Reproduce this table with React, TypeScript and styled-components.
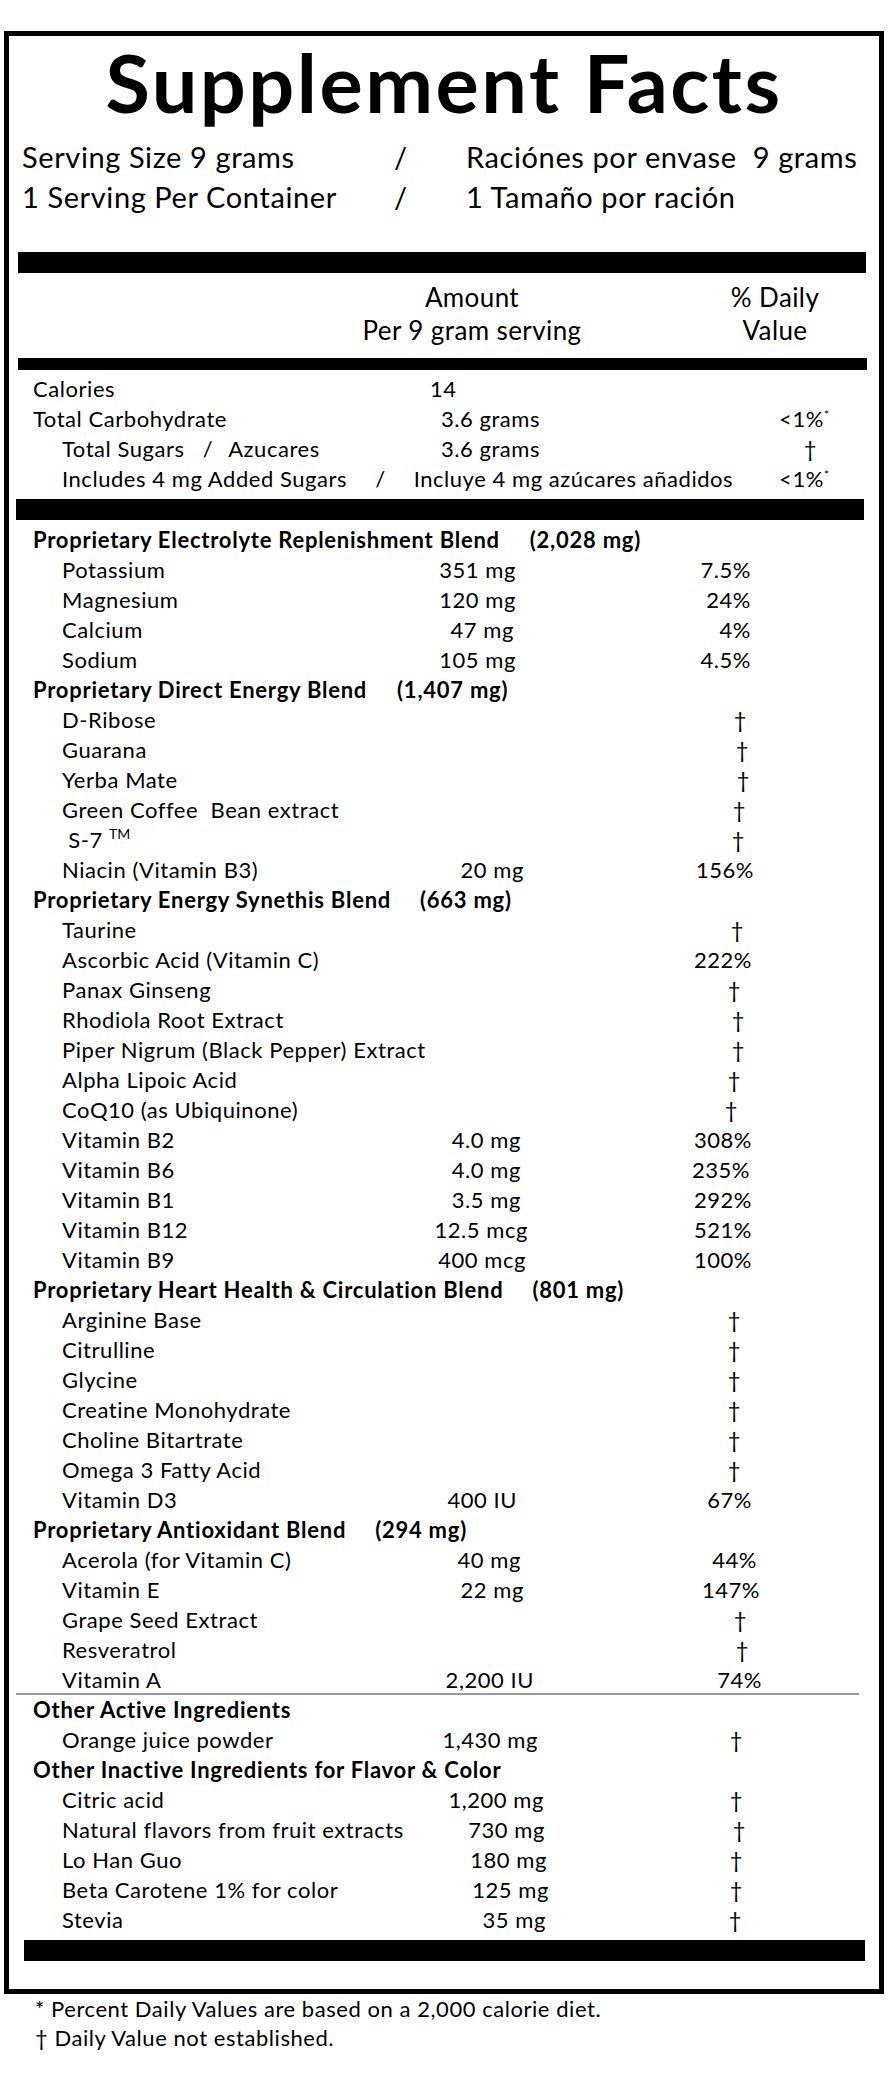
import React from 'react';
import styled, { createGlobalStyle } from 'styled-components';

const GlobalStyle = createGlobalStyle`
  html, body {
    margin: 0;
    padding: 0;
    background: #fff;
  }
  body {
    font-family: Lato, "Liberation Sans", sans-serif;
    color: #000;
  }
`;

const Page = styled.div`
  width: 893px;
  box-sizing: border-box;
  padding: 31px 0 0 4px;
`;

const Panel = styled.section`
  width: 880px;
  box-sizing: border-box;
  border: 5px solid #000;
  padding-bottom: 28px;
`;

const Title = styled.h1`
  margin: 5px 0 0;
  font-size: 81px;
  line-height: 81px;
  font-weight: 700;
  text-align: center;
  letter-spacing: 2.5px;
`;

const Serving = styled.div`
  margin-top: 15px;
  padding-left: 13px;
  display: grid;
  grid-template-columns: 372px 72px 1fr;
  font-size: 29px;
  line-height: 40px;
  letter-spacing: 0.6px;
  white-space: pre;
`;

const Bar = styled.div<{ $h: number; $top: number; $l: number; $r: number }>`
  height: ${(p) => p.$h}px;
  margin: ${(p) => p.$top}px ${(p) => p.$r}px 0 ${(p) => p.$l}px;
  background: #000;
`;

const ColumnHead = styled.div`
  margin-top: 8px;
  display: flex;
  padding-left: 343px;
  font-size: 26px;
  line-height: 33px;
  letter-spacing: 0.4px;
  text-align: center;
`;

const HeadCell = styled.div<{ $w: number; $gap?: number }>`
  width: ${(p) => p.$w}px;
  margin-left: ${(p) => p.$gap ?? 0}px;
`;

const Rows = styled.div<{ $top: number }>`
  margin: ${(p) => p.$top}px 7px 0;
  font-size: 22px;
  letter-spacing: 0.55px;
`;

const Row = styled.div<{ $divider?: boolean }>`
  display: grid;
  grid-template-columns: 397px 130px 312px;
  padding-left: 17px;
  height: ${(p) => (p.$divider ? 28 : 30)}px;
  line-height: 30px;
  white-space: pre;
  ${(p) =>
    p.$divider &&
    `
    margin-right: 13px;
    border-bottom: 2px solid #9a9a9a;
  `}
`;

const Name = styled.div<{ $indent?: boolean; $span?: number }>`
  padding-left: ${(p) => (p.$indent ? 29 : 0)}px;
  grid-column: ${(p) => (p.$span ? `1 / span ${p.$span}` : 'auto')};
`;

const BlendName = styled.div`
  grid-column: 1 / -1;
  font-weight: 700;
  letter-spacing: 0.75px;
`;

const Qty = styled.span<{ $gap: number }>`
  margin-left: ${(p) => p.$gap}px;
`;

const Amount = styled.div<{ $end: number }>`
  text-align: right;
  padding-right: ${(p) => 560 - p.$end}px;
`;

const Daily = styled.div<{ $end: number }>`
  text-align: right;
  padding-right: ${(p) => 872 - p.$end}px;
`;

const Sup = styled.sup<{ $size: number }>`
  font-size: ${(p) => p.$size}px;
  line-height: 0;
  letter-spacing: 0;
  vertical-align: ${(p) => p.$size / 2 + 2}px;
`;

const Notes = styled.div`
  padding-left: 31px;
  font-size: 22px;
  line-height: 29px;
  letter-spacing: 0.55px;
`;

type Item = {
  name?: string;
  blend?: string;
  qty?: string;
  gap?: number;
  amt?: string;
  amtEnd?: number;
  dv?: string;
  dvEnd?: number;
  tm?: boolean;
  divider?: boolean;
};

const D = '\u2020';

const items: Item[] = [
  { blend: 'Proprietary Electrolyte Replenishment Blend', qty: '(2,028 mg)', gap: 30 },
  { name: 'Potassium', amt: '351 mg', amtEnd: 516, dv: '7.5%', dvEnd: 751 },
  { name: 'Magnesium', amt: '120 mg', amtEnd: 516, dv: '24%', dvEnd: 751 },
  { name: 'Calcium', amt: '47 mg', amtEnd: 514, dv: '4%', dvEnd: 751 },
  { name: 'Sodium', amt: '105 mg', amtEnd: 516, dv: '4.5%', dvEnd: 751 },
  { blend: 'Proprietary Direct Energy Blend', qty: '(1,407 mg)', gap: 30 },
  { name: 'D-Ribose', dv: D, dvEnd: 747 },
  { name: 'Guarana', dv: D, dvEnd: 749 },
  { name: 'Yerba Mate', dv: D, dvEnd: 750 },
  { name: 'Green Coffee  Bean extract', dv: D, dvEnd: 746 },
  { name: ' S-7 ', tm: true, dv: D, dvEnd: 745 },
  { name: 'Niacin (Vitamin B3)', amt: '20 mg', amtEnd: 524, dv: '156%', dvEnd: 754 },
  { blend: 'Proprietary Energy Synethis Blend', qty: '(663 mg)', gap: 29 },
  { name: 'Taurine', dv: D, dvEnd: 744 },
  { name: 'Ascorbic Acid (Vitamin C)', dv: '222%', dvEnd: 752 },
  { name: 'Panax Ginseng', dv: D, dvEnd: 741 },
  { name: 'Rhodiola Root Extract', dv: D, dvEnd: 745 },
  { name: 'Piper Nigrum (Black Pepper) Extract', dv: D, dvEnd: 745 },
  { name: 'Alpha Lipoic Acid', dv: D, dvEnd: 741 },
  { name: 'CoQ10 (as Ubiquinone)', dv: D, dvEnd: 738 },
  { name: 'Vitamin B2', amt: '4.0 mg', amtEnd: 521, dv: '308%', dvEnd: 752 },
  { name: 'Vitamin B6', amt: '4.0 mg', amtEnd: 521, dv: '235%', dvEnd: 750 },
  { name: 'Vitamin B1', amt: '3.5 mg', amtEnd: 521, dv: '292%', dvEnd: 752 },
  { name: 'Vitamin B12', amt: '12.5 mcg', amtEnd: 528, dv: '521%', dvEnd: 752 },
  { name: 'Vitamin B9', amt: '400 mcg', amtEnd: 526, dv: '100%', dvEnd: 752 },
  { blend: 'Proprietary Heart Health & Circulation Blend', qty: '(801 mg)', gap: 29 },
  { name: 'Arginine Base', dv: D, dvEnd: 741 },
  { name: 'Citrulline', dv: D, dvEnd: 741 },
  { name: 'Glycine', dv: D, dvEnd: 741 },
  { name: 'Creatine Monohydrate', dv: D, dvEnd: 741 },
  { name: 'Choline Bitartrate', dv: D, dvEnd: 741 },
  { name: 'Omega 3 Fatty Acid', dv: D, dvEnd: 741 },
  { name: 'Vitamin D3', amt: '400 IU', amtEnd: 517, dv: '67%', dvEnd: 752 },
  { blend: 'Proprietary Antioxidant Blend', qty: '(294 mg)', gap: 29 },
  { name: 'Acerola (for Vitamin C)', amt: '40 mg', amtEnd: 521, dv: '44%', dvEnd: 757 },
  { name: 'Vitamin E', amt: '22 mg', amtEnd: 524, dv: '147%', dvEnd: 760 },
  { name: 'Grape Seed Extract', dv: D, dvEnd: 747 },
  { name: 'Resveratrol', dv: D, dvEnd: 749 },
  { name: 'Vitamin A', amt: '2,200 IU', amtEnd: 534, dv: '74%', dvEnd: 762, divider: true },
  { blend: 'Other Active Ingredients' },
  { name: 'Orange juice powder', amt: '1,430 mg', amtEnd: 538, dv: D, dvEnd: 743 },
  { blend: 'Other Inactive Ingredients for Flavor & Color' },
  { name: 'Citric acid', amt: '1,200 mg', amtEnd: 544, dv: D, dvEnd: 743 },
  { name: 'Natural flavors from fruit extracts', amt: '730 mg', amtEnd: 545, dv: D, dvEnd: 746 },
  { name: 'Lo Han Guo', amt: '180 mg', amtEnd: 547, dv: D, dvEnd: 743 },
  { name: 'Beta Carotene 1% for color', amt: '125 mg', amtEnd: 549, dv: D, dvEnd: 743 },
  { name: 'Stevia', amt: '35 mg', amtEnd: 546, dv: D, dvEnd: 742 },
];

const LessThanOne = () => (
  <>
    {'<1%'}
    <Sup $size={12}>*</Sup>
  </>
);

const IngredientRow = ({ item }: { item: Item }) => {
  if (item.blend) {
    return (
      <Row>
        <BlendName>
          {item.blend}
          {item.qty && <Qty $gap={item.gap ?? 30}>{item.qty}</Qty>}
        </BlendName>
      </Row>
    );
  }
  return (
    <Row $divider={item.divider}>
      <Name $indent>
        {item.name}
        {item.tm && <Sup $size={14}>TM</Sup>}
      </Name>
      <Amount $end={item.amtEnd ?? 520}>{item.amt}</Amount>
      <Daily $end={item.dvEnd ?? 750}>{item.dv}</Daily>
    </Row>
  );
};

export default function App() {
  return (
    <Page>
      <GlobalStyle />
      <Panel>
        <Title>Supplement Facts</Title>
        <Serving>
          <span>Serving Size 9 grams</span>
          <span>/</span>
          <span>Raciónes por envase  9 grams</span>
          <span>1 Serving Per Container</span>
          <span>/</span>
          <span>1 Tamaño por ración</span>
        </Serving>

        <Bar $h={21} $top={35} $l={9} $r={13} />
        <ColumnHead>
          <HeadCell $w={240}>
            Amount
            <br />
            Per 9 gram serving
          </HeadCell>
          <HeadCell $w={140} $gap={113}>
            % Daily
            <br />
            Value
          </HeadCell>
        </ColumnHead>
        <Bar $h={12} $top={11} $l={9} $r={12} />

        <Rows $top={4}>
          <Row>
            <Name>Calories</Name>
            <Amount $end={453}>14</Amount>
            <Daily $end={829} />
          </Row>
          <Row>
            <Name>Total Carbohydrate</Name>
            <Amount $end={540}>3.6 grams</Amount>
            <Daily $end={829}>
              <LessThanOne />
            </Daily>
          </Row>
          <Row>
            <Name $indent>
              Total Sugars
              <Qty $gap={18}>/</Qty>
              <Qty $gap={15}>Azucares</Qty>
            </Name>
            <Amount $end={540}>3.6 grams</Amount>
            <Daily $end={817}>{D}</Daily>
          </Row>
          <Row>
            <Name $indent $span={2}>
              Includes 4 mg Added Sugars
              <Qty $gap={28}>/</Qty>
              <Qty $gap={28}>Incluye 4 mg azúcares añadidos</Qty>
            </Name>
            <Daily $end={829}>
              <LessThanOne />
            </Daily>
          </Row>
        </Rows>
        <Bar $h={21} $top={5} $l={7} $r={15} />

        <Rows $top={5}>
          {items.map((item, i) => (
            <IngredientRow key={i} item={item} />
          ))}
        </Rows>
        <Bar $h={21} $top={5} $l={15} $r={14} />
      </Panel>
      <Notes>
        <div>* Percent Daily Values are based on a 2,000 calorie diet.</div>
        <div>{D} Daily Value not established.</div>
      </Notes>
    </Page>
  );
}
